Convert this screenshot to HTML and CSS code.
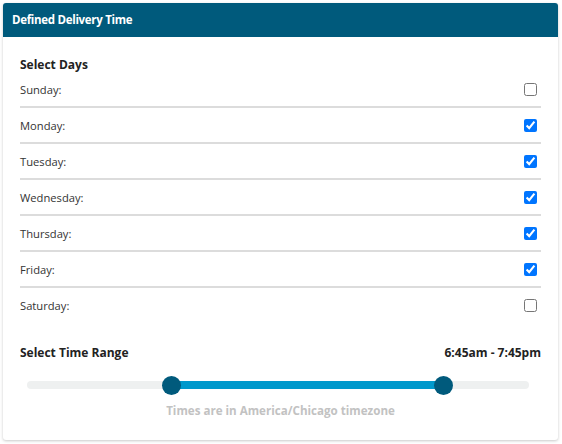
FILE: index.html
```html
<!DOCTYPE html>
<html>
<head>
<meta charset="utf-8">
<link rel="stylesheet" href="styles.css">
</head>
<body>
<div class="card">
  <div class="card-header">Defined Delivery Time</div>
  <div class="card-body">
    <div class="section-title days-title">Select Days</div>
    <div class="days">
      <label class="day"><span>Sunday:</span><input type="checkbox"></label>
      <label class="day"><span>Monday:</span><input type="checkbox" checked></label>
      <label class="day"><span>Tuesday:</span><input type="checkbox" checked></label>
      <label class="day"><span>Wednesday:</span><input type="checkbox" checked></label>
      <label class="day"><span>Thursday:</span><input type="checkbox" checked></label>
      <label class="day"><span>Friday:</span><input type="checkbox" checked></label>
      <label class="day"><span>Saturday:</span><input type="checkbox"></label>
    </div>
    <div class="range-head">
      <span class="section-title">Select Time Range</span>
      <span class="range-value">6:45am - 7:45pm</span>
    </div>
    <div class="slider">
      <div class="track">
        <div class="fill" style="left: 28.7%; width: 54.2%;">
          <span class="handle handle-start"></span>
          <span class="handle handle-end"></span>
        </div>
      </div>
    </div>
    <div class="note">Times are in America/Chicago timezone</div>
  </div>
</div>
</body>
</html>
```
FILE: styles.css
```css
* { box-sizing: border-box; }
html, body { margin: 0; background: #ffffff; }
body {
  padding: 3px 4px 4px 3px;
  font-family: "Open Sans", "Noto Sans", sans-serif;
  color: #222;
}
.card {
  background: #fff;
  border-radius: 3px;
  box-shadow: 0 1px 3px rgba(0,0,0,0.22);
  height: 437px;
  overflow: hidden;
}
.card-header {
  background: #005a7c;
  color: #fff;
  font-weight: 700;
  font-size: 11.5px;
  height: 34px;
  line-height: 34px;
  padding-left: 9px;
  letter-spacing: -0.3px;
}
.card-body {
  padding: 20px 17px 20px 17px;
  display: flex;
  flex-direction: column;
}
.section-title {
  font-weight: 700;
  font-size: 12px;
  line-height: 18px;
  color: #222;
}
.days-title { line-height: 16px; margin-bottom: -1px; }
.days { display: flex; flex-direction: column; }
.day {
  display: flex;
  align-items: center;
  justify-content: space-between;
  height: 36px;
  border-bottom: 2px solid #dcdcdc;
  font-size: 11.2px;
  color: #333;
}
.day:last-child { border-bottom: none; height: 34px; }
.day input {
  margin: 0 4px 0 0;
  width: 13px;
  height: 13px;
}
.range-head {
  display: flex;
  justify-content: space-between;
  align-items: center;
  margin-top: 22px;
}
.range-value {
  font-weight: 700;
  font-size: 12px;
  line-height: 18px;
}
.slider {
  margin: 14px 12px 0 7px;
  height: 18px;
  display: flex;
  align-items: center;
}
.track {
  position: relative;
  width: 100%;
  height: 8px;
  border-radius: 4px;
  background: #eef0f0;
}
.fill {
  position: absolute;
  top: 0;
  bottom: 0;
  background: #0099cc;
}
.handle {
  position: absolute;
  top: 50%;
  width: 19px;
  height: 19px;
  margin-top: -9.5px;
  border-radius: 50%;
  background: #005a7c;
}
.handle-start { left: -9.5px; }
.handle-end { right: -9.5px; }
.note {
  margin-top: 9px;
  text-align: center;
  font-size: 11.6px;
  font-weight: 700;
  line-height: 16px;
  color: #c2c2c2;
}
```
